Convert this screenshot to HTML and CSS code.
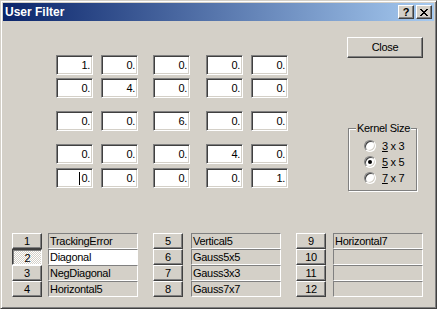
FILE: index.html
```html
<!DOCTYPE html>
<html lang="en">
<head>
	<meta charset="UTF-8">
	<title>User Filter</title>
	<link rel="stylesheet" href="styles.css">
</head>
<body>
<div class="window">
	<div class="caption">
		<span class="caption-text">User Filter</span>
		<div class="caption-btns">
			<span class="cap-btn help">?</span>
			<span class="cap-btn">
				<svg width="8" height="7" viewBox="0 0 8 7" shape-rendering="crispEdges">
					<path d="M0 0h2v1h-2zM6 0h2v1h-2zM1 1h2v1h-2zM5 1h2v1h-2zM2 2h4v1h-4zM3 3h2v1h-2zM2 4h4v1h-4zM1 5h2v1h-2zM5 5h2v1h-2zM0 6h2v1h-2zM6 6h2v1h-2z" fill="#000"/>
				</svg>
			</span>
		</div>
	</div>
	<div class="client">
		<div class="top">
			<!-- kernel coefficients -->
			<div class="matrix">
				<div class="mrow">
					<div class="edit">1.</div><div class="edit">0.</div><div class="edit">0.</div><div class="edit">0.</div><div class="edit">0.</div>
				</div>
				<div class="mrow near">
					<div class="edit">0.</div><div class="edit">4.</div><div class="edit">0.</div><div class="edit">0.</div><div class="edit">0.</div>
				</div>
				<div class="mrow far">
					<div class="edit">0.</div><div class="edit">0.</div><div class="edit">6.</div><div class="edit">0.</div><div class="edit">0.</div>
				</div>
				<div class="mrow far">
					<div class="edit">0.</div><div class="edit">0.</div><div class="edit">0.</div><div class="edit">4.</div><div class="edit">0.</div>
				</div>
				<div class="mrow last">
					<div class="edit"><span class="caret"></span>0.</div><div class="edit">0.</div><div class="edit">0.</div><div class="edit">0.</div><div class="edit">1.</div>
				</div>
			</div>
			<div class="side">
				<div class="btn btn-close">Close</div>
				<div class="group">
					<span class="legend">Kernel Size</span>
					<div class="opt"><span class="radio"></span><span><u>3</u> x 3</span></div>
					<div class="opt"><span class="radio"><span class="dot"></span></span><span><u>5</u> x 5</span></div>
					<div class="opt"><span class="radio"></span><span><u>7</u> x 7</span></div>
				</div>
			</div>
		</div>
		<!-- stored filters -->
		<div class="list">
			<div class="lcol">
				<div class="btn sbtn">1</div><div class="field">TrackingError</div>
				<div class="btn sbtn pressed">2</div><div class="field active">Diagonal</div>
				<div class="btn sbtn">3</div><div class="field">NegDiagonal</div>
				<div class="btn sbtn">4</div><div class="field">Horizontal5</div>
			</div>
			<div class="lcol wide">
				<div class="btn sbtn">5</div><div class="field">Vertical5</div>
				<div class="btn sbtn">6</div><div class="field">Gauss5x5</div>
				<div class="btn sbtn">7</div><div class="field">Gauss3x3</div>
				<div class="btn sbtn">8</div><div class="field">Gauss7x7</div>
			</div>
			<div class="lcol mid">
				<div class="btn sbtn">9</div><div class="field">Horizontal7</div>
				<div class="btn sbtn">10</div><div class="field"></div>
				<div class="btn sbtn">11</div><div class="field"></div>
				<div class="btn sbtn">12</div><div class="field"></div>
			</div>
		</div>
	</div>
</div>
</body>
</html>
```

FILE: styles.css
```css
html,body{margin:0;padding:0;}
body{width:437px;height:309px;overflow:hidden;background:#d4d0c8;color:#000;font:11px/1 "Liberation Sans",Arial,sans-serif;letter-spacing:-0.3px;}

.window{box-sizing:border-box;width:437px;height:309px;background:#d4d0c8;border:1px solid;border-color:#d4d0c8 #404040 #404040 #d4d0c8;box-shadow:inset 1px 1px #fff,inset -1px -1px #808080;padding:2px;}

.caption{height:18px;display:flex;align-items:center;justify-content:space-between;padding:0 2px;background:linear-gradient(to right,#0a246a,#a6caf0);}
.caption-text{color:#fff;font-weight:bold;font-size:12px;letter-spacing:0;}
.caption-btns{display:flex;gap:2px;}
.cap-btn{box-sizing:border-box;width:16px;height:14px;display:flex;align-items:center;justify-content:center;background:#d4d0c8;border:1px solid;border-color:#fff #404040 #404040 #fff;box-shadow:inset -1px -1px #808080;}
.cap-btn.help{font-weight:bold;font-size:11px;line-height:12px;letter-spacing:0;}

.client{margin-top:1px;}
.top{display:flex;height:211px;}

.matrix{margin:33px 0 0 53px;}
.mrow{display:flex;}
.mrow.near{margin-top:3px;}
.mrow.far{margin-top:13px;}
.mrow.last{margin-top:4px;}
.edit{box-sizing:border-box;width:37px;height:20px;border:1px solid;border-color:#808080 #fff #fff #808080;box-shadow:inset 1px 1px #404040,inset -1px -1px #d4d0c8;background:#fff;padding:0 2px;text-align:right;line-height:18px;}
.edit:nth-child(2){margin-left:8px;}
.edit:nth-child(3){margin-left:15px;}
.edit:nth-child(4){margin-left:16px;}
.edit:nth-child(5){margin-left:8px;}
.caret{display:inline-block;width:1px;height:13px;background:#000;vertical-align:-3px;margin-right:1px;}

.btn{box-sizing:border-box;display:flex;align-items:center;justify-content:center;background:#d4d0c8;border:1px solid;border-color:#fff #404040 #404040 #fff;box-shadow:inset -1px -1px #808080;}

.side{margin:15px 0 0 59px;}
.btn-close{width:76px;height:21px;}
.group{position:relative;box-sizing:border-box;width:69px;height:63px;margin:70px 0 0 1px;padding:9px 0 0 15px;border:1px solid #808080;box-shadow:1px 1px #fff,inset 1px 1px #fff;}
.legend{position:absolute;top:-7px;left:7px;padding:0 1px;background:#d4d0c8;line-height:13px;}
.opt{display:flex;align-items:center;height:16px;}
.radio{box-sizing:border-box;width:12px;height:12px;margin-right:6px;display:flex;align-items:center;justify-content:center;border-radius:50%;background:#fff;border:1px solid;border-color:#808080 #fff #fff #808080;box-shadow:inset 1px 1px #404040,inset -1px -1px #d4d0c8;}
.dot{width:4px;height:4px;border-radius:50%;background:#000;}

.list{display:flex;padding-left:9px;}
.lcol{display:grid;grid-template-columns:30px 90px;grid-auto-rows:16px;column-gap:6px;}
.lcol + .lcol{margin-left:15px;}
.lcol.wide{column-gap:8px;}
.lcol.mid{column-gap:7px;}
.sbtn{line-height:14px;}
.sbtn.pressed{border-color:#404040 #fff #fff #404040;box-shadow:inset 1px 1px #808080;padding:1px 0 0 1px;background:repeating-conic-gradient(#fff 0 25%,#d4d0c8 0 50%) 0 0/2px 2px;}
.field{box-sizing:border-box;height:16px;border:1px solid;border-color:#808080 #fff #fff #808080;background:#d4d0c8;padding-left:1px;line-height:14px;white-space:nowrap;overflow:hidden;}
.field.active{background:#fff;}
```
